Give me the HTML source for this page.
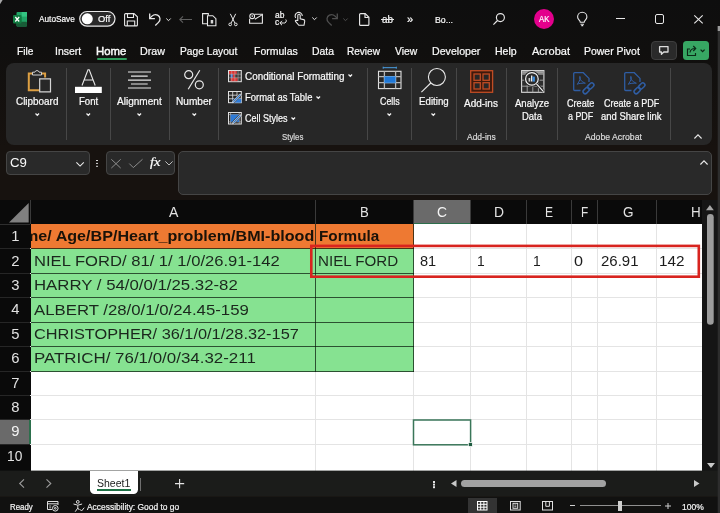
<!DOCTYPE html>
<html><head><meta charset="utf-8"><title>Excel</title>
<style>
*{box-sizing:border-box;margin:0;padding:0}
html,body{width:720px;height:513px;overflow:hidden;background:#0f0f0f;font-family:"Liberation Sans",sans-serif;color:#fff}
#app{position:absolute;left:0;top:0;width:720px;height:513px;overflow:hidden;background:linear-gradient(#0e0e0e 0,#100f0e 50px,#17120f 150px)}
#w{position:absolute;left:0;top:0;width:720px;height:513px;will-change:transform}
.a{position:absolute}
.t{position:absolute;white-space:nowrap;line-height:1;transform-origin:0 0;color:#fafafa;-webkit-text-stroke:.22px}
.sep{position:absolute;width:1px;background:#474747;top:68px;height:72px}
.box{position:absolute;border:1px solid #454545;border-radius:4px;background:#292929}
.vl{position:absolute;width:1px;background:#e4e4e4;top:224px;height:247px}
.hl{position:absolute;height:1px;background:#e4e4e4;left:30px;width:672px}
.bl{position:absolute;background:rgba(10,25,12,.72)}
.hs{position:absolute;width:1px;background:#3a3a3a;top:200px;height:24px}
.rs{position:absolute;height:1px;background:#262626;left:0;width:30px}
svg{position:absolute;overflow:visible}
</style></head><body>
<div id="app"><div id="w">
<!-- corner -->
<svg style="left:0;top:0" width="4" height="5" viewBox="0 0 4 5"><path d="M0 0h2.600l-2.600 4.200z" fill="#a8a8a8"/></svg>
<!-- TITLE BAR -->
<svg style="left:13px;top:11.500px" width="14" height="14.500" viewBox="0 0 14 14.500">
  <rect x="3.500" y="0" width="10.500" height="14.500" rx="1" fill="#21a366"/>
  <rect x="8.700" y="0" width="5.300" height="4.800" fill="#33c481"/>
  <rect x="3.500" y="4.800" width="5.200" height="4.900" fill="#107c41"/>
  <rect x="8.700" y="4.800" width="5.300" height="4.900" fill="#21a366"/>
  <rect x="3.500" y="9.700" width="10.500" height="4.800" rx="1" fill="#185c37"/>
  <rect x="0" y="3" width="8.500" height="8.500" rx="1" fill="#107c41"/>
  <path d="M2.300 5l3.900 4.500M6.200 5l-3.900 4.500" stroke="#fff" stroke-width="1.300"/>
</svg>
<div class="t" style="left:38.70px;top:14.00px;font-size:9.5px;transform:scaleX(0.8689);">AutoSave</div>
<svg style="left:0;top:0" width="720" height="40" viewBox="0 0 720 40"><rect x="79.700" y="11.500" width="35.300" height="14.700" rx="7.350" fill="#2a2a2a" stroke="#e8e8e8" stroke-width="1.200"/><circle cx="87.300" cy="18.800" r="5.500" fill="#fff"/></svg>
<div class="t" style="left:97.70px;top:14.00px;font-size:9.5px;transform:scaleX(0.9840);">Off</div>
<!-- save -->
<svg style="left:124px;top:12.500px" width="14" height="13.500" viewBox="0 0 14 13.500" fill="none" stroke="#e8e8e8" stroke-width="1.100">
  <path d="M0.600 1.600a1 1 0 0 1 1-1h8.400l3.400 3.200v8.100a1 1 0 0 1-1 1h-10.800a1 1 0 0 1-1-1z"/><path d="M3.500 0.600v3.900h6v-3.900"/><path d="M3.300 12.900v-4.900h7.400v4.900"/>
</svg>
<!-- undo -->
<svg style="left:148.500px;top:12.500px" width="12" height="13" viewBox="0 0 12 13" fill="none" stroke="#e8e8e8" stroke-width="1.300">
  <path d="M0.700 0.500v5.200h5.200"/><path d="M0.900 5.500c2-3.300 5.200-4.600 7.700-3.300c2.800 1.500 3.200 5 .9 7.200l-3.200 3.100"/>
</svg>
<svg style="left:165.500px;top:17.500px" width="5" height="3.500" viewBox="0 0 5 3.500" fill="none" stroke="#e8e8e8" stroke-width="1"><path d="M0.300 0.500l2.200 2.200l2.200-2.200"/></svg>
<!-- back arrow -->
<svg style="left:178.500px;top:15.500px" width="13" height="7" viewBox="0 0 13 7" fill="none" stroke="#5f5f5f" stroke-width="1.100">
  <path d="M13 3.500H0.800M4 0.300L0.800 3.500L4 6.700"/>
</svg>
<!-- paste -->
<svg style="left:202px;top:12.500px" width="14.500" height="13" viewBox="0 0 14.500 13" fill="none" stroke="#e8e8e8" stroke-width="1.100">
  <path d="M5 10.700h-4.400v-10.100h5.700v2"/><path d="M5.500 2.700h5.300l3.100 3v7h-8.400z" fill="#0f0f0f"/><path d="M8.700 7h2.500v3.500h-2.500z" fill="#d8d8d8" stroke="none"/>
</svg>
<!-- cut -->
<svg style="left:227.500px;top:12.500px" width="10" height="13.500" viewBox="0 0 10 13.500" fill="none" stroke="#e8e8e8" stroke-width="1">
  <path d="M2.300 0.800l4.600 9.300M7.700 0.800l-4.600 9.300"/><circle cx="2.200" cy="11.400" r="1.350"/><circle cx="7.800" cy="11.400" r="1.350"/>
</svg>
<!-- email -->
<svg style="left:248.800px;top:12.500px" width="14" height="11" viewBox="0 0 14 11" fill="none" stroke="#e8e8e8" stroke-width="1.100">
  <path d="M5.500 1.300h7.900v8.900h-12.800v-4.500"/><path d="M5.800 6.300l7.200-4.400"/><circle cx="3.200" cy="3.200" r="2.400"/><path d="M3.200 2.300v1.700"/>
</svg>
<!-- ab replace -->
<div class="t" style="left:274.80px;top:11.00px;font-size:8.5px;transform:scaleX(0.9927);color:#f4f4f4;">ab</div>
<div class="t" style="left:274.80px;top:18.00px;font-size:8.5px;transform:scaleX(0.9882);color:#f4f4f4;">c</div>
<svg style="left:279px;top:19px" width="7.500" height="6.500" viewBox="0 0 7.500 6.500" fill="none" stroke="#f0f0f0" stroke-width="1">
  <path d="M1 4h3.500a2.200 2.200 0 0 0 2.300-3.500"/><path d="M3 1.800l-2.200 2.200l2.200 2.200"/>
</svg>
<!-- touch -->
<svg style="left:294px;top:12px" width="11.500" height="14" viewBox="0 0 11.500 14" fill="none" stroke="#e8e8e8" stroke-width="1.100">
  <path d="M1.700 6a3.600 3.600 0 1 1 6.600-2"/><path d="M3.800 8.500v-5a1.200 1.200 0 0 1 2.400 0v3.300l3.400.8c.9.200 1.300.9 1.100 1.800l-.7 3.900h-5.200l-3.300-3.900c-.5-.8.400-1.600 1.300-.9z"/>
</svg>
<svg style="left:311.700px;top:17.300px" width="5" height="3.500" viewBox="0 0 5 3.500" fill="none" stroke="#e8e8e8" stroke-width="1"><path d="M0.300 0.500l2.200 2.200l2.200-2.200"/></svg>
<!-- redo disabled -->
<svg style="left:326px;top:12.500px" width="12" height="13" viewBox="0 0 12 13" fill="none" stroke="#4f4f4f" stroke-width="1.300">
  <path d="M11.300 0.500v5.200h-5.200"/><path d="M11.100 5.500c-2-3.300-5.200-4.600-7.700-3.300c-2.800 1.500-3.200 5-.9 7.200l3.200 3.100"/>
</svg>
<svg style="left:343px;top:17.500px" width="5" height="3.500" viewBox="0 0 5 3.500" fill="none" stroke="#4f4f4f" stroke-width="1"><path d="M0.300 0.500l2.200 2.200l2.200-2.200"/></svg>
<!-- new doc -->
<svg style="left:358.500px;top:12.500px" width="10.500" height="13" viewBox="0 0 10.500 13" fill="none" stroke="#e8e8e8" stroke-width="1.150">
  <path d="M0.600 1.600a1 1 0 0 1 1-1h4.600l3.700 3.700v7.100a1 1 0 0 1-1 1h-7.300a1 1 0 0 1-1-1z"/><path d="M6 0.800v3.700h3.700"/>
</svg>
<div class="t" style="left:382.00px;top:14.00px;font-size:10.5px;transform:scaleX(0.9412);color:#f4f4f4;">ab</div>
<div class="a" style="left:381px;top:19px;width:12.500px;height:1px;background:#e8e8e8"></div>
<div class="t" style="left:407.30px;top:15.00px;font-size:10px;transform:scaleX(1.1146);">»</div>
<div class="t" style="left:434.50px;top:15.00px;font-size:9.5px;transform:scaleX(0.9209);">Bo...</div>
<!-- search -->
<svg style="left:492.500px;top:13px" width="12" height="12" viewBox="0 0 12 12" fill="none" stroke="#e8e8e8" stroke-width="1.150">
  <circle cx="7.400" cy="4.600" r="4"/><path d="M4.500 7.500L0.400 11.600"/>
</svg>
<div class="a" style="left:534px;top:9px;width:20px;height:20px;border-radius:10px;background:#e3008c"></div>
<div class="t" style="left:538.70px;top:15.00px;font-size:8.6px;transform:scaleX(0.8981);">AK</div>
<!-- bulb -->
<svg style="left:577px;top:12px" width="10.500" height="14" viewBox="0 0 10.500 14" fill="none" stroke="#e8e8e8" stroke-width="1.100">
  <path d="M3.300 10.300c0-1.800-2.700-2.700-2.700-5.400a4.650 4.650 0 0 1 9.300 0c0 2.700-2.700 3.600-2.700 5.400z"/><path d="M3.500 12.200h3.500M4.300 13.600h1.900"/>
</svg>
<div class="a" style="left:616px;top:18.300px;width:9px;height:1.100px;background:#e8e8e8"></div>
<div class="a" style="left:655px;top:14.300px;width:9.400px;height:9.400px;border:1.100px solid #e8e8e8;border-radius:2px"></div>
<svg style="left:694.300px;top:14.800px" width="9" height="8.600" viewBox="0 0 9 8.600" stroke="#e8e8e8" stroke-width="1.100"><path d="M0.300 0.300l8.400 8M8.700 0.300l-8.400 8"/></svg>

<!-- TABS -->
<div class="t" style="left:17.30px;top:46.00px;font-size:11px;transform:scaleX(0.9248);">File</div>
<div class="t" style="left:54.80px;top:46.00px;font-size:11px;transform:scaleX(0.9522);">Insert</div>
<div class="t" style="left:96.30px;top:46.00px;font-size:11px;transform:scaleX(1.0292);-webkit-text-stroke:.45px #fafafa;">Home</div>
<div class="a" style="left:96.500px;top:58.400px;width:30.500px;height:2px;background:#2f9e5c;border-radius:1px"></div>
<div class="t" style="left:140.30px;top:46.00px;font-size:11px;transform:scaleX(0.9738);">Draw</div>
<div class="t" style="left:180.30px;top:46.00px;font-size:11px;transform:scaleX(0.9291);">Page Layout</div>
<div class="t" style="left:253.50px;top:46.00px;font-size:11px;transform:scaleX(0.9554);">Formulas</div>
<div class="t" style="left:311.50px;top:46.00px;font-size:11px;transform:scaleX(0.9462);">Data</div>
<div class="t" style="left:347.30px;top:46.00px;font-size:11px;transform:scaleX(0.9119);">Review</div>
<div class="t" style="left:394.80px;top:46.00px;font-size:11px;transform:scaleX(0.9384);">View</div>
<div class="t" style="left:431.80px;top:46.00px;font-size:11px;transform:scaleX(0.9653);">Developer</div>
<div class="t" style="left:495.30px;top:46.00px;font-size:11px;transform:scaleX(0.9591);">Help</div>
<div class="t" style="left:531.50px;top:46.00px;font-size:11px;transform:scaleX(1.0021);">Acrobat</div>
<div class="t" style="left:583.70px;top:46.00px;font-size:11px;transform:scaleX(0.9505);">Power Pivot</div>
<div class="a" style="left:651px;top:41px;width:25.500px;height:19px;border:1px solid #3e3e3e;border-radius:4px;background:#2a2a2a"></div>
<svg style="left:659px;top:46px" width="9.500" height="9" viewBox="0 0 9.500 9" fill="none" stroke="#dedede" stroke-width="1.300" stroke-linejoin="round"><path d="M0.600 0.600h8.400v5.400h-4.200l-2.400 2.300v-2.300h-1.800z"/></svg>
<div class="a" style="left:683px;top:41px;width:26px;height:19px;border-radius:3.500px;background:#37a763"></div>
<svg style="left:687px;top:45px" width="20" height="11" viewBox="0 0 20 11" fill="none" stroke="#0b2a17" stroke-width="1.150"><path d="M3 4h-2.500v6.500h8v-2.500"/><path d="M3 7.500c.3-2.800 2-4 5-4M6.300 1l2.400 2.500l-2.400 2.500"/><path d="M13.600 4.600l2 2l2-2" stroke-width="1.300"/></svg>

<!-- RIBBON -->
<div class="a" style="left:0;top:144.500px;width:720px;height:56px;background:#17120f"></div>
<div class="a" style="left:6px;top:63px;width:706px;height:81.500px;background:#272727;border-radius:8px"></div>
<!-- clipboard -->
<svg style="left:27px;top:68px" width="24.500" height="24.500" viewBox="0 0 24.500 24.500" fill="none">
  <path d="M13 22.200h-11.200v-16.800h16.300v4" stroke="#dea043" stroke-width="2"/>
  <path d="M5.500 7v-2.800h2.300a2.300 2.300 0 0 1 4.400 0h2.300v2.800z" fill="#272727" stroke="#cfcfcf" stroke-width="1"/>
  <path d="M12.700 10.900h10.800v13h-10.800z" fill="#272727" stroke="#d4d4d4" stroke-width="1.200"/>
</svg>
<div class="t" style="left:16.30px;top:96.00px;font-size:10.5px;transform:scaleX(0.9432);">Clipboard</div>
<svg style="left:35px;top:112.500px" width="4.600" height="3.200" viewBox="0 0 4.600 3.200" fill="none" stroke="#f0f0f0" stroke-width="1.250"><path d="M0.500 0.500l1.800 1.800l1.800-1.800"/></svg>
<div class="sep" style="left:66px"></div>
<!-- font -->
<svg style="left:74.500px;top:68.500px" width="27" height="24" viewBox="0 0 27 24" fill="none">
  <path d="M7 16.500L13 0.700h1.200L20.200 16.500M9.300 11h8.600" stroke="#e8e8e8" stroke-width="1.100"/><rect x="0" y="17.800" width="26.800" height="6.200" fill="#fff"/>
</svg>
<div class="t" style="left:78.50px;top:96.00px;font-size:10.5px;transform:scaleX(0.9136);">Font</div>
<svg style="left:85.500px;top:112.500px" width="4.600" height="3.200" viewBox="0 0 4.600 3.200" fill="none" stroke="#f0f0f0" stroke-width="1.250"><path d="M0.500 0.500l1.800 1.800l1.800-1.800"/></svg>
<div class="sep" style="left:110px"></div>
<!-- alignment -->
<svg style="left:128px;top:70.500px" width="23" height="18" viewBox="0 0 23 18" fill="none" stroke="#e8e8e8" stroke-width="1.050">
  <path d="M0 0.900h23M3 5.100h16.700M0 9.100h23M3 13h16.700M0 17h23"/>
</svg>
<div class="t" style="left:117.30px;top:96.00px;font-size:10.5px;transform:scaleX(0.9571);">Alignment</div>
<svg style="left:136.500px;top:112.500px" width="4.600" height="3.200" viewBox="0 0 4.600 3.200" fill="none" stroke="#f0f0f0" stroke-width="1.250"><path d="M0.500 0.500l1.800 1.800l1.800-1.800"/></svg>
<div class="sep" style="left:169px"></div>
<!-- number -->
<svg style="left:184px;top:70px" width="20" height="19.500" viewBox="0 0 20 19.500" fill="none" stroke="#e8e8e8" stroke-width="1.200">
  <circle cx="4.700" cy="4.700" r="4"/><circle cx="15.300" cy="14.800" r="4"/><path d="M15.800 0.300L4.200 19.200"/>
</svg>
<div class="t" style="left:175.80px;top:96.00px;font-size:10.5px;transform:scaleX(0.9636);">Number</div>
<svg style="left:191.500px;top:112.500px" width="4.600" height="3.200" viewBox="0 0 4.600 3.200" fill="none" stroke="#f0f0f0" stroke-width="1.250"><path d="M0.500 0.500l1.800 1.800l1.800-1.800"/></svg>
<div class="sep" style="left:218px"></div>
<!-- styles -->
<svg style="left:228.200px;top:69.800px" width="13.800" height="12.200" viewBox="0 0 13.800 12.200" fill="none">
  <rect x="0.500" y="0.500" width="12.800" height="11.200" fill="#3c3c3c" stroke="#e2e2e2"/>
  <rect x="1" y="1" width="7.800" height="3.200" fill="#dc3434"/><rect x="2.600" y="4.200" width="2.200" height="3.600" fill="#3b7de0"/><rect x="4.800" y="4.200" width="2" height="3.600" fill="#dc3434"/><rect x="2.600" y="7.800" width="7" height="3.400" fill="#dc3434"/>
  <path d="M0.500 4.200h12.800M0.500 7.800h12.800M3.700 0.500v11.200M6.900 0.500v11.200M10.100 0.500v11.200" stroke="#c8c8c8" stroke-width=".6" opacity=".75"/>
</svg>
<div class="t" style="left:245.00px;top:71.00px;font-size:10.5px;transform:scaleX(0.9419);">Conditional Formatting</div>
<svg style="left:348.300px;top:74.300px" width="4.600" height="3.200" viewBox="0 0 4.600 3.200" fill="none" stroke="#f0f0f0" stroke-width="1.250"><path d="M0.500 0.500l1.800 1.800l1.800-1.800"/></svg>
<svg style="left:228.200px;top:91.300px" width="14" height="12.200" viewBox="0 0 14 12.200" fill="none">
  <rect x="0.500" y="0.500" width="12.800" height="11.200" stroke="#e2e2e2"/>
  <path d="M0.500 4.200h12.800M0.500 7.800h12.800M4.700 0.500v11.200M9 0.500v11.200" stroke="#e2e2e2" stroke-width=".8"/>
  <path d="M4.700 7.800h8.600v3.900h-8.600z" fill="#2f7bd6"/>
  <path d="M5.300 10.800l7.300-7.500" stroke="#272727" stroke-width="3"/><path d="M4.500 11.700l1.800-.6l6.800-7l-1.200-1.200l-6.800 7z" fill="#2f7bd6" stroke="#e8e8e8" stroke-width=".7"/>
</svg>
<div class="t" style="left:245.00px;top:92.00px;font-size:10.5px;transform:scaleX(0.8975);">Format as Table</div>
<svg style="left:316px;top:95.500px" width="4.600" height="3.200" viewBox="0 0 4.600 3.200" fill="none" stroke="#f0f0f0" stroke-width="1.250"><path d="M0.500 0.500l1.800 1.800l1.800-1.800"/></svg>
<svg style="left:228.200px;top:112.300px" width="14" height="12.500" viewBox="0 0 14 12.500" fill="none">
  <rect x="0.500" y="0.500" width="12.800" height="11.500" stroke="#e2e2e2"/><path d="M0.500 2.600h12.800M0.500 9.900h12.800M2.600 0.500v11.500M11.200 0.500v11.500" stroke="#c8c8c8" stroke-width=".6"/>
  <rect x="2.600" y="2.600" width="8.600" height="7.300" fill="#2f7bd6"/>
  <path d="M5.300 10.800l7.300-7.500" stroke="#272727" stroke-width="3"/><path d="M4.500 11.700l1.800-.6l6.800-7l-1.200-1.200l-6.800 7z" fill="#2f7bd6" stroke="#e8e8e8" stroke-width=".7"/>
</svg>
<div class="t" style="left:245.00px;top:113.00px;font-size:10.5px;transform:scaleX(0.8587);">Cell Styles</div>
<svg style="left:290.600px;top:116.600px" width="4.600" height="3.200" viewBox="0 0 4.600 3.200" fill="none" stroke="#f0f0f0" stroke-width="1.250"><path d="M0.500 0.500l1.800 1.800l1.800-1.800"/></svg>
<div class="t" style="left:281.70px;top:132.00px;font-size:9.5px;transform:scaleX(0.8232);color:#dadada;">Styles</div>
<div class="sep" style="left:367px"></div>
<!-- cells -->
<svg style="left:378px;top:67px" width="23.500" height="22" viewBox="0 0 23.500 22" fill="none">
  <path d="M5.200 -0.300v2M18.300 -0.300v2M5.200 0.700h13.100" stroke="#4aa0e6" stroke-width="1"/>
  <rect x="0.500" y="4.300" width="22.500" height="17.300" stroke="#e0e0e0" stroke-width="1.100"/>
  <path d="M0.500 9.700h22.500M0.500 15.600h22.500M6.400 4.300v17.300M17.600 4.300v17.300" stroke="#b5b5b5" stroke-width="1.300"/>
  <rect x="6.400" y="9.400" width="11.200" height="6.500" fill="#1f78d8" stroke="#5aa2ea" stroke-width=".6"/>
</svg>
<div class="t" style="left:379.80px;top:96.00px;font-size:10.5px;transform:scaleX(0.8439);">Cells</div>
<svg style="left:387px;top:112.500px" width="4.600" height="3.200" viewBox="0 0 4.600 3.200" fill="none" stroke="#f0f0f0" stroke-width="1.250"><path d="M0.500 0.500l1.800 1.800l1.800-1.800"/></svg>
<div class="sep" style="left:411px"></div>
<!-- editing -->
<svg style="left:421px;top:68px" width="25" height="24.500" viewBox="0 0 25 24.500" fill="none" stroke="#e8e8e8" stroke-width="1.100">
  <circle cx="15.900" cy="9" r="8.500"/><path d="M9.800 15L0.400 24.200"/>
</svg>
<div class="t" style="left:418.50px;top:96.00px;font-size:10.5px;transform:scaleX(0.9250);">Editing</div>
<svg style="left:430.800px;top:112.500px" width="4.600" height="3.200" viewBox="0 0 4.600 3.200" fill="none" stroke="#f0f0f0" stroke-width="1.250"><path d="M0.500 0.500l1.800 1.800l1.800-1.800"/></svg>
<div class="sep" style="left:455.500px"></div>
<!-- add-ins -->
<svg style="left:470px;top:70px" width="23.300" height="23" viewBox="0 0 23.300 23" fill="none" stroke="#c04c24" stroke-width="1.300">
  <rect x="0.700" y="0.700" width="21.900" height="21.600" fill="#3f190c"/><rect x="4" y="4" width="6.300" height="6.300" fill="#272727"/><rect x="13" y="4" width="6.300" height="6.300" fill="#272727"/><rect x="4" y="12.700" width="6.300" height="6.300" fill="#272727"/><rect x="13" y="12.700" width="6.300" height="6.300" fill="#272727"/>
</svg>
<div class="t" style="left:464.30px;top:98.00px;font-size:10.5px;transform:scaleX(0.9520);">Add-ins</div>
<div class="t" style="left:466.50px;top:132.00px;font-size:9.5px;transform:scaleX(0.8908);color:#dadada;">Add-ins</div>
<div class="sep" style="left:506px"></div>
<!-- analyze -->
<svg style="left:520.500px;top:70px" width="23.500" height="23" viewBox="0 0 23.500 23" fill="none">
  <rect x="0.600" y="0.600" width="22.300" height="21.700" fill="#2e2e2e" stroke="#dcdcdc" stroke-width="1.100"/>
  <rect x="1.100" y="1.100" width="21.300" height="2.600" fill="#9c9c9c"/>
  <path d="M0.600 4.200h22.300M0.600 10.200h22.300M0.600 16.200h22.300M6.200 4.200v18M11.800 4.200v18M17.400 4.200v18" stroke="#a8a8a8" stroke-width=".9"/>
  <circle cx="10.900" cy="8.900" r="7.200" fill="#262626" stroke="#262626" stroke-width="1.500"/>
  <circle cx="10.900" cy="8.900" r="6.300" fill="#2b2b2b" stroke="#f2f2f2" stroke-width="1.200"/>
  <path d="M8.400 11.600v-3.600" stroke="#c9c9c9" stroke-width="1.700"/><path d="M10.700 11.600v-6" stroke="#f4f4f4" stroke-width="1.300"/><path d="M12.700 11.600v-5" stroke="#3b8ee0" stroke-width="2.300"/>
  <path d="M15.500 13.800l7 7.800" stroke="#262626" stroke-width="2.800"/><path d="M15.500 13.800l7 7.800" stroke="#f2f2f2" stroke-width="1.200"/>
</svg>
<div class="t" style="left:515.00px;top:98.00px;font-size:10.5px;transform:scaleX(0.9101);">Analyze</div>
<div class="t" style="left:522.00px;top:111.00px;font-size:10.5px;transform:scaleX(0.9014);">Data</div>
<div class="sep" style="left:557px"></div>
<!-- create pdf -->
<svg style="left:572.500px;top:71.500px" width="22" height="23" viewBox="0 0 22 23" fill="none" stroke="#2f5da3" stroke-width="1.300">
  <path d="M7.500 18.500h-5.800a1 1 0 0 1-1-1v-15.800a1 1 0 0 1 1-1h8.600l5.700 5.700v3.500"/>
  <path d="M4.300 12.300c2.200-3 3.800-6.800 2.800-7.800s-1.600 4 4.600 6.400c2.800 1-4-.6-7.400 1.400z" stroke-width="1"/>
  <g transform="translate(15.500 16.300) rotate(-45)"><rect x="-6.800" y="-2.100" width="7.200" height="4.200" rx="2.100" stroke="#272727" stroke-width="3.200"/><rect x="-0.400" y="-2.100" width="7.200" height="4.200" rx="2.100" stroke="#272727" stroke-width="3.200"/><rect x="-6.800" y="-2.100" width="7.200" height="4.200" rx="2.100" stroke-width="1.500"/><rect x="-0.400" y="-2.100" width="7.200" height="4.200" rx="2.100" stroke-width="1.500"/></g>
</svg>
<div class="t" style="left:567.00px;top:98.00px;font-size:10.5px;transform:scaleX(0.8662);">Create</div>
<div class="t" style="left:567.60px;top:111.00px;font-size:10.5px;transform:scaleX(0.8466);">a PDF</div>
<svg style="left:623.500px;top:71.500px" width="22" height="23" viewBox="0 0 22 23" fill="none" stroke="#2f5da3" stroke-width="1.300">
  <path d="M7.500 18.500h-5.800a1 1 0 0 1-1-1v-15.800a1 1 0 0 1 1-1h8.600l5.700 5.700v3.500"/>
  <path d="M4.300 12.300c2.200-3 3.800-6.800 2.800-7.800s-1.600 4 4.600 6.400c2.800 1-4-.6-7.400 1.400z" stroke-width="1"/>
  <g transform="translate(15.500 16.300) rotate(-45)"><rect x="-6.800" y="-2.100" width="7.200" height="4.200" rx="2.100" stroke="#272727" stroke-width="3.200"/><rect x="-0.400" y="-2.100" width="7.200" height="4.200" rx="2.100" stroke="#272727" stroke-width="3.200"/><rect x="-6.800" y="-2.100" width="7.200" height="4.200" rx="2.100" stroke-width="1.500"/><rect x="-0.400" y="-2.100" width="7.200" height="4.200" rx="2.100" stroke-width="1.500"/></g>
</svg>
<div class="t" style="left:603.70px;top:98.00px;font-size:10.5px;transform:scaleX(0.8613);">Create a PDF</div>
<div class="t" style="left:600.60px;top:111.00px;font-size:10.5px;transform:scaleX(0.9026);">and Share link</div>
<div class="t" style="left:585.40px;top:132.00px;font-size:9.5px;transform:scaleX(0.9129);color:#dadada;">Adobe Acrobat</div>
<div class="sep" style="left:669.500px"></div>
<svg style="left:694px;top:134px" width="8" height="5" viewBox="0 0 8 5" fill="none" stroke="#e8e8e8" stroke-width="1.100"><path d="M0.400 4.500l3.600-3.700l3.600 3.700"/></svg>

<!-- FORMULA BAR -->
<div class="box" style="left:6px;top:151px;width:83.500px;height:23.500px"></div>
<div class="t" style="left:10.30px;top:157.00px;font-size:12.3px;transform:scaleX(1.0741);-webkit-text-stroke:0;">C9</div>
<svg style="left:76.300px;top:162px" width="8.200" height="4.600" viewBox="0 0 8.200 4.600" fill="none" stroke="#ececec" stroke-width="1.100"><path d="M0.400 0.400l3.700 3.700l3.700-3.700"/></svg>
<div class="a" style="left:96.300px;top:159.500px;width:1.600px;height:1.600px;background:#d6d6d6;box-shadow:0 2.900px 0 #d6d6d6,0 5.800px 0 #d6d6d6"></div>
<div class="box" style="left:105.500px;top:151px;width:69.500px;height:23.500px"></div>
<svg style="left:111.300px;top:158.800px" width="10" height="9.400" viewBox="0 0 10 9.400" fill="none" stroke="#8c8c8c" stroke-width="1"><path d="M0.300 0.300l9.400 8.800M9.700 0.300l-9.400 8.800"/></svg>
<svg style="left:128.800px;top:158.800px" width="13.800" height="9" viewBox="0 0 13.800 9" fill="none" stroke="#8c8c8c" stroke-width="1"><path d="M0.300 4.600l4 4l9.200-8.300"/></svg>
<div class="t" style="left:150.30px;top:155.00px;font-size:13px;transform:scaleX(1.1181);font-family:'Liberation Serif',serif;font-style:italic;">fx</div>
<svg style="left:165px;top:161.300px" width="8" height="4.500" viewBox="0 0 8 4.500" fill="none" stroke="#bdbdbd" stroke-width="1"><path d="M0.400 0.400l3.600 3.600l3.600-3.600"/></svg>
<div class="box" style="left:178px;top:150.800px;width:534px;height:44px;border-radius:5px"></div>
<svg style="left:700px;top:159.500px" width="8" height="5" viewBox="0 0 8 5" fill="none" stroke="#ececec" stroke-width="1.100"><path d="M0.400 4.500l3.600-3.700l3.600 3.700"/></svg>

<!-- SHEET -->
<div class="a" style="left:0;top:200px;width:702px;height:24.300px;background:#0a0a0a"></div>
<div class="a" style="left:0;top:224px;width:30.500px;height:246.500px;background:#0a0a0a"></div>
<div class="a" style="left:30.500px;top:224.300px;width:671.700px;height:247.200px;background:#fff"></div>
<!-- selected headers -->
<div class="a" style="left:413px;top:200px;width:58px;height:23px;background:#6a6a6a"></div>
<div class="a" style="left:413px;top:223px;width:58px;height:1px;background:#2c6f4c"></div>
<div class="a" style="left:0;top:420px;width:29.500px;height:24px;background:#6a6a6a"></div>
<div class="a" style="left:29.300px;top:420px;width:1.300px;height:24px;background:#2c6f4c"></div>
<svg style="left:9.200px;top:202.800px" width="19.700" height="19.400" viewBox="0 0 19.700 19.400"><path d="M19.700 0v19.400h-19.700z" fill="#808080"/></svg>
<div class="a" style="left:0;top:224px;width:30px;height:1px;background:#2e2e2e"></div>
<!-- header separators -->
<div class="hs" style="left:30px"></div><div class="hs" style="left:315px"></div><div class="hs" style="left:413px"></div><div class="hs" style="left:470px"></div><div class="hs" style="left:526px"></div><div class="hs" style="left:571px"></div><div class="hs" style="left:597px"></div><div class="hs" style="left:656px"></div>
<div class="rs" style="top:248px"></div><div class="rs" style="top:273px"></div><div class="rs" style="top:297px"></div><div class="rs" style="top:322px"></div><div class="rs" style="top:346px"></div><div class="rs" style="top:371px"></div><div class="rs" style="top:395px"></div><div class="rs" style="top:419px"></div><div class="rs" style="top:444px"></div>
<!-- column letters -->
<div class="t" style="left:168.60px;top:205.00px;font-size:14.8px;transform:scaleX(0.9519);-webkit-text-stroke:0;color:#e2e2e2;">A</div>
<div class="t" style="left:360.20px;top:205.00px;font-size:14.8px;transform:scaleX(0.8911);-webkit-text-stroke:0;color:#e2e2e2;">B</div>
<div class="t" style="left:437.00px;top:205.00px;font-size:14.8px;transform:scaleX(0.9357);-webkit-text-stroke:0;color:#f4f4f4;">C</div>
<div class="t" style="left:493.50px;top:205.00px;font-size:14.8px;transform:scaleX(0.9357);-webkit-text-stroke:0;color:#e2e2e2;">D</div>
<div class="t" style="left:545.00px;top:205.00px;font-size:14.8px;transform:scaleX(0.8101);-webkit-text-stroke:0;color:#e2e2e2;">E</div>
<div class="t" style="left:580.80px;top:205.00px;font-size:14.8px;transform:scaleX(0.7959);-webkit-text-stroke:0;color:#e2e2e2;">F</div>
<div class="t" style="left:622.50px;top:205.00px;font-size:14.8px;transform:scaleX(0.9118);-webkit-text-stroke:0;color:#e2e2e2;">G</div>
<div class="t" style="left:691.30px;top:205.00px;font-size:14.8px;transform:scaleX(0.9076);-webkit-text-stroke:0;color:#e2e2e2;">H</div>
<!-- row numbers -->
<div class="t" style="left:11.30px;top:229.00px;font-size:14.8px;-webkit-text-stroke:0;color:#e2e2e2;">1</div>
<div class="t" style="left:11.30px;top:254.00px;font-size:14.8px;-webkit-text-stroke:0;color:#e2e2e2;">2</div>
<div class="t" style="left:11.30px;top:278.00px;font-size:14.8px;-webkit-text-stroke:0;color:#e2e2e2;">3</div>
<div class="t" style="left:11.30px;top:302.00px;font-size:14.8px;-webkit-text-stroke:0;color:#e2e2e2;">4</div>
<div class="t" style="left:11.30px;top:327.00px;font-size:14.8px;-webkit-text-stroke:0;color:#e2e2e2;">5</div>
<div class="t" style="left:11.30px;top:351.00px;font-size:14.8px;-webkit-text-stroke:0;color:#e2e2e2;">6</div>
<div class="t" style="left:11.30px;top:376.00px;font-size:14.8px;-webkit-text-stroke:0;color:#e2e2e2;">7</div>
<div class="t" style="left:11.30px;top:400.00px;font-size:14.8px;-webkit-text-stroke:0;color:#e2e2e2;">8</div>
<div class="t" style="left:11.30px;top:424.00px;font-size:14.8px;-webkit-text-stroke:0;color:#f4f4f4;">9</div>
<div class="t" style="left:7.20px;top:449.00px;font-size:14.8px;transform:scaleX(0.9290);-webkit-text-stroke:0;color:#e2e2e2;">10</div>
<!-- gridlines -->
<div class="vl" style="left:315px"></div><div class="vl" style="left:413px"></div><div class="vl" style="left:470px"></div><div class="vl" style="left:526px"></div><div class="vl" style="left:571px"></div><div class="vl" style="left:597px"></div><div class="vl" style="left:656px"></div>
<div class="hl" style="top:248px"></div><div class="hl" style="top:273px"></div><div class="hl" style="top:297px"></div><div class="hl" style="top:322px"></div><div class="hl" style="top:346px"></div><div class="hl" style="top:371px"></div><div class="hl" style="top:395px"></div><div class="hl" style="top:419px"></div><div class="hl" style="top:444px"></div>
<!-- fills -->
<div class="a" style="left:30.500px;top:224px;width:383.500px;height:25px;background:#ee7932"></div>
<div class="a" style="left:30.500px;top:249px;width:383.500px;height:123px;background:#86e291"></div>
<div class="bl" style="left:315px;top:224px;width:1px;height:148px"></div>
<div class="bl" style="left:413px;top:224px;width:1px;height:148px"></div>
<div class="bl" style="left:30.500px;top:248px;width:383px;height:1px"></div>
<div class="bl" style="left:30.500px;top:273px;width:383px;height:1px"></div>
<div class="bl" style="left:30.500px;top:297px;width:383px;height:1px"></div>
<div class="bl" style="left:30.500px;top:322px;width:383px;height:1px"></div>
<div class="bl" style="left:30.500px;top:346px;width:383px;height:1px"></div>
<div class="bl" style="left:30.500px;top:371px;width:383px;height:1px"></div>
<!-- cell text -->
<div class="a" style="left:30.500px;top:224.300px;width:284.500px;height:24px;overflow:hidden">
<div class="t" style="left:-6.25px;top:5.00px;font-size:14.5px;transform:scaleX(1.1107);-webkit-text-stroke:0;color:#1a1208;font-weight:bold;">me/ Age/BP/Heart_problem/BMI-blood</div>
</div>
<div class="t" style="left:318.50px;top:229.00px;font-size:14.5px;transform:scaleX(1.0541);-webkit-text-stroke:0;color:#1a1208;font-weight:bold;">Formula</div>
<div class="t" style="left:34.00px;top:253.00px;font-size:15px;transform:scaleX(1.1068);-webkit-text-stroke:0;color:#1b271d;">NIEL FORD/ 81/ 1/ 1/0/26.91-142</div>
<div class="t" style="left:34.00px;top:277.00px;font-size:15px;transform:scaleX(1.1193);-webkit-text-stroke:0;color:#1b271d;">HARRY / 54/0/0/1/25.32-82</div>
<div class="t" style="left:34.00px;top:302.00px;font-size:15px;transform:scaleX(1.1182);-webkit-text-stroke:0;color:#1b271d;">ALBERT /28/0/1/0/24.45-159</div>
<div class="t" style="left:34.00px;top:326.00px;font-size:15px;transform:scaleX(1.0889);-webkit-text-stroke:0;color:#1b271d;">CHRISTOPHER/ 36/1/0/1/28.32-157</div>
<div class="t" style="left:34.00px;top:350.00px;font-size:15px;transform:scaleX(1.1271);-webkit-text-stroke:0;color:#1b271d;">PATRICH/ 76/1/0/0/34.32-211</div>
<div class="t" style="left:318.30px;top:253.00px;font-size:15px;transform:scaleX(1.0094);-webkit-text-stroke:0;color:#1b271d;">NIEL FORD</div>
<div class="t" style="left:420.30px;top:253.00px;font-size:15px;transform:scaleX(0.9708);-webkit-text-stroke:0;color:#1c1c1c;">81</div>
<div class="t" style="left:477.30px;top:253.00px;font-size:15px;transform:scaleX(0.9228);-webkit-text-stroke:0;color:#1c1c1c;">1</div>
<div class="t" style="left:532.80px;top:253.00px;font-size:15px;transform:scaleX(0.9228);-webkit-text-stroke:0;color:#1c1c1c;">1</div>
<div class="t" style="left:573.50px;top:253.00px;font-size:15px;transform:scaleX(1.0787);-webkit-text-stroke:0;color:#1c1c1c;">0</div>
<div class="t" style="left:600.50px;top:253.00px;font-size:15px;transform:scaleX(0.9988);-webkit-text-stroke:0;color:#1c1c1c;">26.91</div>
<div class="t" style="left:659.30px;top:253.00px;font-size:15px;transform:scaleX(1.0187);-webkit-text-stroke:0;color:#1c1c1c;">142</div>
<!-- red box -->
<svg style="left:0;top:0" width="720" height="513" viewBox="0 0 720 513" fill="none"><rect x="311.300" y="245.900" width="387.500" height="30.800" stroke="#d8241f" stroke-width="2.600"/></svg>
<!-- selection -->
<svg style="left:0;top:0" width="720" height="513" viewBox="0 0 720 513" fill="none"><rect x="413.500" y="420" width="57.100" height="24.800" stroke="#3a7659" stroke-width="1.500"/><rect x="468.300" y="442.400" width="4.200" height="4.200" fill="#1f5c40" stroke="#fff" stroke-width=".8"/></svg>
<!-- v scrollbar -->
<div class="a" style="left:702.200px;top:200px;width:17.800px;height:270.800px;background:#151515"></div>
<svg style="left:706.300px;top:204.700px" width="7.800" height="5.200" viewBox="0 0 7.800 5.200"><path d="M3.900 0l3.900 5.200h-7.800z" fill="#a6a6a6"/></svg>
<svg style="left:0;top:0" width="720" height="513" viewBox="0 0 720 513"><rect x="707" y="214" width="6.700" height="110.800" rx="3.300" fill="#9c9c9c"/></svg>
<svg style="left:706.500px;top:463px" width="8" height="5" viewBox="0 0 8 5"><path d="M0 0h8l-4 5z" fill="#c9c9c9"/></svg>

<!-- SHEET BAR -->
<svg style="left:0;top:0" width="720" height="513" viewBox="0 0 720 513"><rect x="0" y="470.600" width="720" height="26" fill="#1b1c1a"/></svg>
<svg style="left:19px;top:479.200px" width="5.500" height="9" viewBox="0 0 5.500 9" fill="none" stroke="#9c9c9c" stroke-width="1.100"><path d="M5 0.400l-4.300 4.100l4.300 4.100"/></svg>
<svg style="left:45.800px;top:479.200px" width="5.500" height="9" viewBox="0 0 5.500 9" fill="none" stroke="#9c9c9c" stroke-width="1.100"><path d="M0.500 0.400l4.300 4.100l-4.300 4.100"/></svg>
<div class="a" style="left:90.300px;top:470.500px;width:47.700px;height:23.300px;background:#fff;border-radius:0 0 4.500px 4.500px"></div>
<div class="t" style="left:97.00px;top:477.00px;font-size:11.7px;transform:scaleX(0.8989);-webkit-text-stroke:0;color:#1c1c1c;">Sheet1</div>
<div class="a" style="left:97.200px;top:489.400px;width:33.400px;height:2px;background:#1e7145"></div>
<div class="a" style="left:140px;top:477.500px;width:1px;height:13.500px;background:#6f6f6f"></div>
<svg style="left:175px;top:479px" width="9.200" height="9.200" viewBox="0 0 9.200 9.200" stroke="#e4e4e4" stroke-width="1.100"><path d="M4.600 0v9.200M0 4.600h9.200"/></svg>
<div class="a" style="left:433.400px;top:481px;width:1.600px;height:1.600px;background:#e4e4e4;box-shadow:0 2.600px 0 #e4e4e4,0 5.200px 0 #e4e4e4"></div>
<svg style="left:451px;top:480px" width="5.500" height="7" viewBox="0 0 5.500 7"><path d="M5.500 0v7l-5.500-3.500z" fill="#c9c9c9"/></svg>
<div class="a" style="left:461px;top:480px;width:144.500px;height:7.200px;background:#a2a2a2;border-radius:3.600px"></div>
<svg style="left:693.500px;top:480px" width="5.500" height="7" viewBox="0 0 5.500 7"><path d="M0 0v7l5.500-3.500z" fill="#c9c9c9"/></svg>
<!-- STATUS -->
<div class="a" style="left:0;top:496.500px;width:720px;height:16.500px;background:#111110"></div>
<div class="t" style="left:9.50px;top:502.00px;font-size:9.5px;transform:scaleX(0.8264);color:#f4f4f4;">Ready</div>
<svg style="left:47.200px;top:500.500px" width="12" height="10.500" viewBox="0 0 12 10.500" fill="none" stroke="#e0e0e0" stroke-width="1"><path d="M5 8.500h-4.500v-8h10.500v3.500"/><path d="M0.500 2.800h10.500"/><circle cx="8.300" cy="7.300" r="2.800" fill="#111110"/><circle cx="8.300" cy="7.300" r=".9"/><path d="M2.200 5h2M2.200 6.800h2" stroke-width=".8"/></svg>
<svg style="left:73px;top:499.500px" width="11.500" height="12" viewBox="0 0 11.500 12" fill="none" stroke="#e0e0e0" stroke-width="1"><circle cx="4.800" cy="1.900" r="1.400"/><path d="M0.500 4l4.300 1.200l4.300-1.200M4.800 5.200v2.800l-2.600 3.700M4.800 8l1.500 2"/><path d="M7 9.300l1.500 1.700l2.700-3.300"/></svg>
<div class="t" style="left:87.30px;top:502.00px;font-size:9.5px;transform:scaleX(0.8863);color:#f4f4f4;">Accessibility: Good to go</div>
<div class="a" style="left:467.500px;top:497.500px;width:29.500px;height:15.500px;background:#333"></div>
<svg style="left:477px;top:501px" width="10.500" height="9.500" viewBox="0 0 10.500 9.500" fill="none" stroke="#fff" stroke-width="1"><rect x="0.500" y="0.500" width="9.500" height="8.500"/><path d="M0.500 3.300h9.500M0.500 6.200h9.500M3.700 0.500v8.500M6.900 0.500v8.500"/></svg>
<svg style="left:510.200px;top:501px" width="10.700" height="9.500" viewBox="0 0 10.700 9.500" fill="none" stroke="#e0e0e0" stroke-width="1"><rect x="0.500" y="0.500" width="9.700" height="8.500"/><rect x="3" y="2.300" width="4.700" height="5"/><path d="M4.300 4h2.100M4.300 5.700h2.100" stroke-width=".8"/></svg>
<svg style="left:542.300px;top:501px" width="11" height="9.500" viewBox="0 0 11 9.500" fill="none" stroke="#e0e0e0" stroke-width="1"><rect x="0.500" y="0.500" width="10" height="8.500"/><path d="M3.800 0.500v4.800h3.600v-4.800"/></svg>
<div class="a" style="left:569.800px;top:505.300px;width:5px;height:1px;background:#cfcfcf"></div>
<div class="a" style="left:580px;top:505.300px;width:81.300px;height:1px;background:#8f8f8f"></div>
<div class="a" style="left:617.800px;top:501px;width:4.200px;height:10px;background:#cfcfcf"></div>
<svg style="left:665.300px;top:502.500px" width="6" height="6" viewBox="0 0 6 6" stroke="#cfcfcf" stroke-width="1"><path d="M3 0v6M0 3h6"/></svg>
<div class="t" style="left:682.00px;top:502.00px;font-size:9.5px;transform:scaleX(0.8967);color:#f4f4f4;">100%</div>
<!-- edge strip -->
<svg style="left:0;top:0" width="720" height="513" viewBox="0 0 720 513"><rect x="717.700" y="26" width="2.300" height="487" fill="#2d2d2d"/><rect x="717.700" y="26" width="2.300" height="5" fill="#9a9a9a"/></svg>

</div></div>
</body></html>
